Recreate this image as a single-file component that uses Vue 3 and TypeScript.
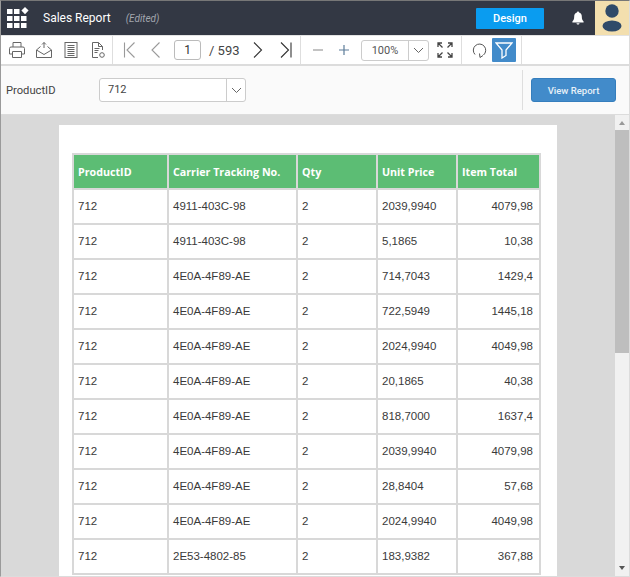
<script setup lang="ts">
interface Row {
  carrier: string;
  price: string;
  total: string;
}

const rows: Row[] = [
  { carrier: '4911-403C-98', price: '2039,9940', total: '4079,98' },
  { carrier: '4911-403C-98', price: '5,1865', total: '10,38' },
  { carrier: '4E0A-4F89-AE', price: '714,7043', total: '1429,4' },
  { carrier: '4E0A-4F89-AE', price: '722,5949', total: '1445,18' },
  { carrier: '4E0A-4F89-AE', price: '2024,9940', total: '4049,98' },
  { carrier: '4E0A-4F89-AE', price: '20,1865', total: '40,38' },
  { carrier: '4E0A-4F89-AE', price: '818,7000', total: '1637,4' },
  { carrier: '4E0A-4F89-AE', price: '2039,9940', total: '4079,98' },
  { carrier: '4E0A-4F89-AE', price: '28,8404', total: '57,68' },
  { carrier: '4E0A-4F89-AE', price: '2024,9940', total: '4049,98' },
  { carrier: '2E53-4802-85', price: '183,9382', total: '367,88' },
]
</script>

<template>
  <div class="app">
    <header class="topbar">
      <svg class="grid-logo" width="22" height="22" viewBox="0 0 22 22" fill="#fff">
        <rect x="0" y="2" width="5.5" height="5" /><rect x="7" y="2" width="5.5" height="5" />
        <path d="M18 0l3.6 3.6L18 7.2l-3.6-3.6z" />
        <rect x="0" y="9" width="5.5" height="5" /><rect x="7" y="9" width="5.5" height="5" /><rect x="14" y="9" width="5.5" height="5" />
        <rect x="0" y="16" width="5.5" height="5" /><rect x="7" y="16" width="5.5" height="5" /><rect x="14" y="16" width="5.5" height="5" />
      </svg>
      <span class="report-name">Sales Report</span>
      <span class="edited">(Edited)</span>
      <button class="design">Design</button>
      <svg class="bell" width="12" height="14" viewBox="0 0 12 14" fill="#fff">
        <path d="M6 0.5c.7 0 1 .5 1 1 1.9.5 2.8 2 2.8 4 0 2.5.6 3.8 1.8 5v.9H.4v-.9c1.200-1.200 1.800-2.500 1.800-5 0-2 .9-3.500 2.800-4 0-.5.3-1 1-1zM4.500 12.300h3c0 .8-.7 1.300-1.500 1.300s-1.500-.5-1.500-1.300z" />
      </svg>
      <div class="avatar">
        <svg width="20" height="28" viewBox="0 0 20 28" fill="#2f4a69">
          <circle cx="10" cy="7" r="6.700" />
          <ellipse cx="10" cy="22" rx="9.500" ry="5.500" />
        </svg>
      </div>
    </header>

    <div class="toolbar">
      <div class="tool-group first">
        <svg class="ic" width="18" height="18" viewBox="0 0 18 18" fill="none" stroke="#666" stroke-width="1">
          <path d="M5 6V1.500h8V6M4.500 13H1.500V7.500q0-1.500 1.500-1.500h12q1.500 0 1.500 1.500V13h-3M4.500 10.500h9v6h-9z" />
        </svg>
        <svg class="ic" width="18" height="18" viewBox="0 0 18 18" fill="none" stroke="#666" stroke-width="1">
          <path d="M9 7V1.500M7 3.500l2-2 2 2M5.500 5.500L1.500 9v7.500h15V9l-4-3.500M1.500 9L9 13.500 16.500 9" />
        </svg>
        <svg class="ic" width="18" height="18" viewBox="0 0 18 18" fill="none" stroke="#666" stroke-width="1">
          <rect x="3" y="1.500" width="12" height="15" />
          <path d="M5.500 4.500h7M5.500 6.500h7M5.500 8.500h7M5.500 10.500h7M5.500 12.500h7M5.500 14.500h7" stroke-width="1.200" />
        </svg>
        <svg class="ic" width="18" height="18" viewBox="0 0 18 18" fill="none" stroke="#666" stroke-width="1">
          <path d="M9 16.500H3.500v-15h6l4 4V9M9.500 1.500v4h4M5.500 7.500h5M5.500 9.500h4M5.500 11.500h3" />
          <circle cx="13" cy="14" r="2.300" />
        </svg>
      </div>
      <div class="tool-group pager">
        <svg class="ic" width="14" height="18" viewBox="0 0 14 18" fill="none" stroke="#9a9a9a" stroke-width="1.100">
          <path d="M1.500 1.500v15M11.500 1.500L4 9l7.500 7.500" />
        </svg>
        <svg class="ic prev" width="12" height="18" viewBox="0 0 12 18" fill="none" stroke="#9a9a9a" stroke-width="1.100">
          <path d="M9.500 1.500L2 9l7.500 7.500" />
        </svg>
        <div class="page-input">1</div>
        <span class="page-total">/ 593</span>
        <svg class="ic next" width="12" height="18" viewBox="0 0 12 18" fill="none" stroke="#333" stroke-width="1.100">
          <path d="M2 1.500L9.500 9 2 16.500" />
        </svg>
        <svg class="ic last" width="14" height="18" viewBox="0 0 14 18" fill="none" stroke="#333" stroke-width="1.100">
          <path d="M2 1.500L9.500 9 2 16.500M12 1.500v15" />
        </svg>
      </div>
      <div class="tool-group zoom">
        <svg class="ic" width="12" height="12" viewBox="0 0 12 12" stroke="#9a9a9a" stroke-width="1.200"><path d="M1 6h10" /></svg>
        <svg class="ic plus" width="12" height="12" viewBox="0 0 12 12" stroke="#5c7c99" stroke-width="1.200"><path d="M1 6h10M6 1v10" /></svg>
        <div class="zoom-select">
          <span class="zoom-value">100%</span>
          <span class="zoom-arrow">
            <svg width="11" height="7" viewBox="0 0 11 7" fill="none" stroke="#666" stroke-width="1"><path d="M1 1l4.500 4.500L10 1" /></svg>
          </span>
        </div>
        <svg class="ic fit" width="16" height="16" viewBox="0 0 16 16" fill="none" stroke="#444" stroke-width="1.300">
          <path d="M1 5V1h4M1 1l4.500 4.500M11 1h4v4M15 1l-4.500 4.500M1 11v4h4M1 15l4.500-4.500M11 15h4v-4M15 15l-4.500-4.500" />
        </svg>
      </div>
      <div class="tool-group actions">
        <svg class="ic" width="15" height="18" viewBox="0 0 15 18" fill="none" stroke="#555" stroke-width="1">
          <path d="M3 13.500A6.200 6.200 0 1 1 11.500 14M7.500 12.500l.5 4 3-2" />
        </svg>
        <div class="filter">
          <svg width="18" height="18" viewBox="0 0 18 18" fill="none" stroke="#fff" stroke-width="1.300">
            <path d="M1 2h16l-6 7v5.500l-4 2.500V9z" />
          </svg>
        </div>
      </div>
    </div>

    <div class="params">
      <label class="param-label">ProductID</label>
      <div class="param-select">
        <span class="param-value">712</span>
        <span class="param-arrow">
          <svg width="11" height="7" viewBox="0 0 11 7" fill="none" stroke="#666" stroke-width="1"><path d="M1 1l4.500 4.500L10 1" /></svg>
        </span>
      </div>
      <div class="param-action">
        <button class="view-report">View Report</button>
      </div>
    </div>

    <div class="viewer">
      <div class="canvas">
        <div class="page">
          <table class="report">
            <colgroup>
              <col class="c1" /><col class="c2" /><col class="c3" /><col class="c3" /><col class="c5" />
            </colgroup>
            <thead>
              <tr>
                <th>ProductID</th>
                <th>Carrier Tracking No.</th>
                <th>Qty</th>
                <th>Unit Price</th>
                <th>Item Total</th>
              </tr>
            </thead>
            <tbody>
              <tr v-for="(row, i) in rows" :key="i">
                <td>712</td>
                <td>{{ row.carrier }}</td>
                <td>2</td>
                <td>{{ row.price }}</td>
                <td class="num">{{ row.total }}</td>
              </tr>
            </tbody>
          </table>
        </div>
      </div>
      <div class="scrollbar">
        <span class="arrow up" />
        <div class="track"><div class="thumb" /></div>
        <span class="arrow down" />
      </div>
    </div>
  </div>
</template>

<style scoped>
.app {
  width: 630px;
  height: 577px;
  box-sizing: border-box;
  border: 1px solid #dcdcdc;
  border-left-color: #9a9a9a;
  border-top-color: #777;
  display: flex;
  flex-direction: column;
  overflow: hidden;
  font-family: Roboto, "Liberation Sans", sans-serif;
  background: #fafafa;
}

.topbar {
  height: 34px;
  flex: none;
  background: #333844;
  display: flex;
  align-items: center;
  padding-left: 6px;
  color: #fff;
}

.grid-logo {
  flex: none;
}

.report-name {
  margin-left: 14px;
  font-size: 12px;
  font-weight: 400;
}

.edited {
  margin-left: 15px;
  font-size: 10px;
  font-style: italic;
  color: #a2a6ae;
}

.design {
  margin-left: auto;
  width: 68px;
  height: 21px;
  border: none;
  border-radius: 1px;
  background: #0a9cf0;
  color: #fff;
  font: 500 11px Roboto, sans-serif;
  padding: 0;
}

.bell {
  margin-left: 28px;
}

.avatar {
  margin-left: 11px;
  width: 34px;
  height: 34px;
  background: #f3dfae;
  display: flex;
  align-items: center;
  justify-content: center;
}

.toolbar {
  height: 31px;
  flex: none;
  box-sizing: border-box;
  display: flex;
  align-items: stretch;
  background: #fff;
  border-top: 1px solid #e3e3e3;
  border-bottom: 2px solid #dcdcdc;
}

.tool-group {
  display: flex;
  align-items: center;
  border-right: 1px solid #dedede;
}

.ic {
  flex: none;
}

.first {
  width: 112px;
  padding-left: 7px;
  gap: 9px;
  box-sizing: border-box;
}

.pager {
  width: 188px;
  padding-left: 10px;
  box-sizing: border-box;
}

.prev {
  margin-left: 13px;
}

.page-input {
  margin-left: 12px;
  width: 27px;
  height: 20px;
  box-sizing: border-box;
  border: 1px solid #bbb;
  border-radius: 3px;
  text-align: center;
  font-size: 12px;
  line-height: 18px;
  color: #333;
}

.page-total {
  margin-left: 8px;
  font-size: 13px;
  color: #444;
  white-space: nowrap;
}

.next {
  margin-left: 12px;
}

.last {
  margin-left: 15px;
}

.zoom {
  width: 161px;
  box-sizing: border-box;
  padding-left: 11px;
}

.plus {
  margin-left: 14px;
}

.zoom-select {
  margin-left: 11px;
  width: 68px;
  height: 21px;
  box-sizing: border-box;
  border: 1px solid #ccc;
  border-radius: 3px;
  display: flex;
}

.zoom-value {
  width: 46px;
  text-align: center;
  font-size: 11px;
  line-height: 19px;
  color: #555;
  border-right: 1px solid #ccc;
}

.zoom-arrow,
.param-arrow {
  flex: 1;
  display: flex;
  align-items: center;
  justify-content: center;
}

.fit {
  margin-left: 8px;
}

.actions {
  width: 60px;
  box-sizing: border-box;
  padding-left: 10px;
  gap: 5px;
}

.filter {
  width: 24px;
  height: 24px;
  border-radius: 1px;
  background: #428bca;
  display: flex;
  align-items: center;
  justify-content: center;
}

.params {
  height: 49px;
  flex: none;
  box-sizing: border-box;
  display: flex;
  align-items: center;
  background: #fafafa;
  border-bottom: 1px solid #dcdcdc;
  padding-left: 5px;
}

.param-label {
  width: 93px;
  font-size: 11.2px;
  color: #444;
}

.param-select {
  width: 147px;
  height: 24px;
  box-sizing: border-box;
  display: flex;
  background: #fff;
  border: 1px solid #ccc;
  border-radius: 3px;
}

.param-value {
  width: 127px;
  box-sizing: border-box;
  padding-left: 8px;
  font-size: 11px;
  line-height: 22px;
  color: #444;
  border-right: 1px solid #ccc;
}

.param-action {
  margin-left: auto;
  height: 40px;
  display: flex;
  align-items: center;
  border-left: 1px solid #dedede;
  padding: 0 13px 0 8px;
}

.view-report {
  width: 85px;
  height: 24px;
  padding: 0;
  border: 1px solid #357ebd;
  border-radius: 3px;
  background: #428bca;
  color: #e8f1f8;
  font: 500 9.5px Roboto, sans-serif;
}

.viewer {
  flex: 1;
  min-height: 0;
  display: flex;
  background: #d9d9d9;
}

.canvas {
  flex: 1;
  min-width: 0;
  overflow: hidden;
  padding: 10px 0 0 58px;
}

.page {
  width: 498px;
  box-sizing: border-box;
  background: #fff;
  padding: 28px 0 0 13px;
  height: 600px;
}

.report {
  width: 467px;
  table-layout: fixed;
  border-collapse: collapse;
  font-family: "Liberation Sans", Arial, sans-serif;
  font-size: 11.5px;
  color: #3a3a3a;
}

.c1 {
  width: 95px;
}

.c2 {
  width: 129px;
}

.c3 {
  width: 80px;
}

.c5 {
  width: 83px;
}

th,
td {
  border: 2px solid #d8d8d8;
  padding: 0 4px;
  text-align: left;
  white-space: nowrap;
}

th {
  height: 33px;
  background: #5cbd74;
  color: #fff;
  font-family: "Open Sans", sans-serif;
  font-weight: 700;
  font-size: 10.7px;
}

td {
  height: 31px;
  padding-bottom: 2px;
}

.num {
  text-align: right;
  padding-right: 6px;
}

.scrollbar {
  width: 14px;
  flex: none;
  background: #f1f1f1;
  display: flex;
  flex-direction: column;
  align-items: center;
}

.arrow {
  flex: none;
  width: 0;
  border-left: 3.500px solid transparent;
  border-right: 3.500px solid transparent;
}

.up {
  height: 0;
  margin: 6px 0 5px;
  border-bottom: 4px solid #999;
}

.down {
  height: 0;
  margin: 5px 0 6px;
  border-top: 4px solid #555;
}

.track {
  flex: 1;
  align-self: stretch;
}

.thumb {
  height: 223px;
  background: #bebebe;
}
</style>
